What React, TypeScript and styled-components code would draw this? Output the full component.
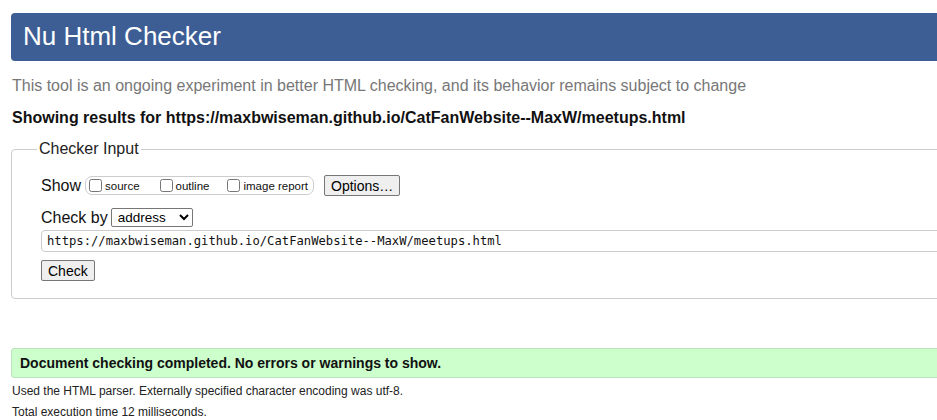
import React from 'react';
import styled, { createGlobalStyle } from 'styled-components';

const GlobalStyle = createGlobalStyle`
  html, body {
    margin: 0;
    padding: 0;
    background: #fff;
    overflow: hidden;
  }
  body {
    font-family: "Liberation Sans", Arial, sans-serif;
    color: #111;
  }
`;

const Page = styled.div`
  width: 1100px;
  padding: 13px 0 0 11px;
`;

const Banner = styled.h1`
  margin: 0;
  height: 48px;
  box-sizing: border-box;
  padding: 7px 12px 0;
  background: #3d5e94;
  color: #fff;
  font-weight: normal;
  font-size: 26px;
  line-height: 32px;
  border-radius: 4px;
`;

const Tagline = styled.p`
  margin: 15px 0 0 1px;
  color: #777;
  font-size: 16px;
  line-height: 20px;
`;

const ResultsFor = styled.p`
  margin: 12px 0 0 1px;
  font-weight: bold;
  font-size: 16px;
  line-height: 20px;
`;

const InputFieldset = styled.fieldset`
  margin: 12px 0 0;
  padding: 8px 29px 10px;
  border: 1px solid #ccc;
  border-radius: 4px;
  height: 159px;
  box-sizing: border-box;
`;

const Legend = styled.legend`
  padding: 0 2px;
  margin-left: -4px;
  font-size: 16px;
  color: #222;
`;

const Row = styled.div<{ $top?: number }>`
  display: flex;
  align-items: center;
  margin-top: ${(p) => p.$top ?? 0}px;
  font-size: 16px;
`;

const RowLabel = styled.span`
  margin-right: 3px;
`;

const Pill = styled.span`
  display: inline-flex;
  align-items: center;
  height: 19px;
  box-sizing: border-box;
  border: 1px solid #ccc;
  border-radius: 7px;
  padding: 0 5px 0 3px;
  margin-left: 1px;
  font-size: 11.5px;
`;

const CheckLabel = styled.label<{ $gap?: number }>`
  display: inline-flex;
  align-items: center;
  margin-right: ${(p) => p.$gap ?? 0}px;
`;

const Box = styled.input`
  width: 13px;
  height: 13px;
  margin: 0 3px 0 0;
`;

const Button = styled.button<{ $left?: number }>`
  font-family: "Liberation Sans", Arial, sans-serif;
  font-size: 14px;
  color: #000;
  background: #efefef;
  border: 1px solid #767676;
  border-radius: 2px;
  padding: 1px 6px;
  height: 21px;
  margin-left: ${(p) => p.$left ?? 0}px;
`;

const Select = styled.select`
  font-family: "Liberation Sans", Arial, sans-serif;
  font-size: 13.5px;
  width: 82px;
  height: 19px;
  border: 1px solid #767676;
  border-radius: 2px;
  background: #fff;
  padding: 0 0 0 2px;
`;

const UrlInput = styled.input`
  display: block;
  width: 100%;
  box-sizing: border-box;
  margin-top: 3px;
  height: 22px;
  border: 1px solid #ccc;
  border-radius: 4px;
  padding: 0 5px;
  font-family: "DejaVu Sans Mono", "Liberation Mono", monospace;
  font-size: 12.2px;
  color: #111;
`;

const Success = styled.p`
  margin: 49px 0 0;
  height: 30px;
  box-sizing: border-box;
  padding: 0 8px;
  display: flex;
  align-items: center;
  background: #ccffcc;
  border: 1px solid #bde0bd;
  border-radius: 3px;
  font-weight: bold;
  font-size: 14px;
`;

const Note = styled.p<{ $top: number }>`
  margin: ${(p) => p.$top}px 0 0 1px;
  font-size: 12px;
  line-height: 14px;
  color: #222;
`;

const App: React.FC = () => {
  const url = 'https://maxbwiseman.github.io/CatFanWebsite--MaxW/meetups.html';
  return (
    <React.Fragment>
      <GlobalStyle />
      <Page>
        <Banner>Nu Html Checker</Banner>
        <Tagline>This tool is an ongoing experiment in better HTML checking, and its behavior remains subject to change</Tagline>
        <ResultsFor>Showing results for {url}</ResultsFor>
        <InputFieldset>
          <Legend>Checker Input</Legend>
          <Row $top={9}>
            <RowLabel>Show</RowLabel>
            <Pill>
              <CheckLabel $gap={20}>
                <Box type="checkbox" />
                source
              </CheckLabel>
              <CheckLabel $gap={18}>
                <Box type="checkbox" />
                outline
              </CheckLabel>
              <CheckLabel>
                <Box type="checkbox" />
                image report
              </CheckLabel>
            </Pill>
            <Button $left={10}>Options…</Button>
          </Row>
          <Row $top={12}>
            <RowLabel>Check by</RowLabel>
            <Select defaultValue="address">
              <option value="address">address</option>
              <option value="file">file upload</option>
              <option value="text">text input</option>
            </Select>
          </Row>
          <UrlInput type="url" defaultValue={url} />
          <Row $top={8}>
            <Button>Check</Button>
          </Row>
        </InputFieldset>
        <Success>Document checking completed. No errors or warnings to show.</Success>
        <Note $top={6}>Used the HTML parser. Externally specified character encoding was utf-8.</Note>
        <Note $top={7}>Total execution time 12 milliseconds.</Note>
      </Page>
    </React.Fragment>
  );
};

export default App;
